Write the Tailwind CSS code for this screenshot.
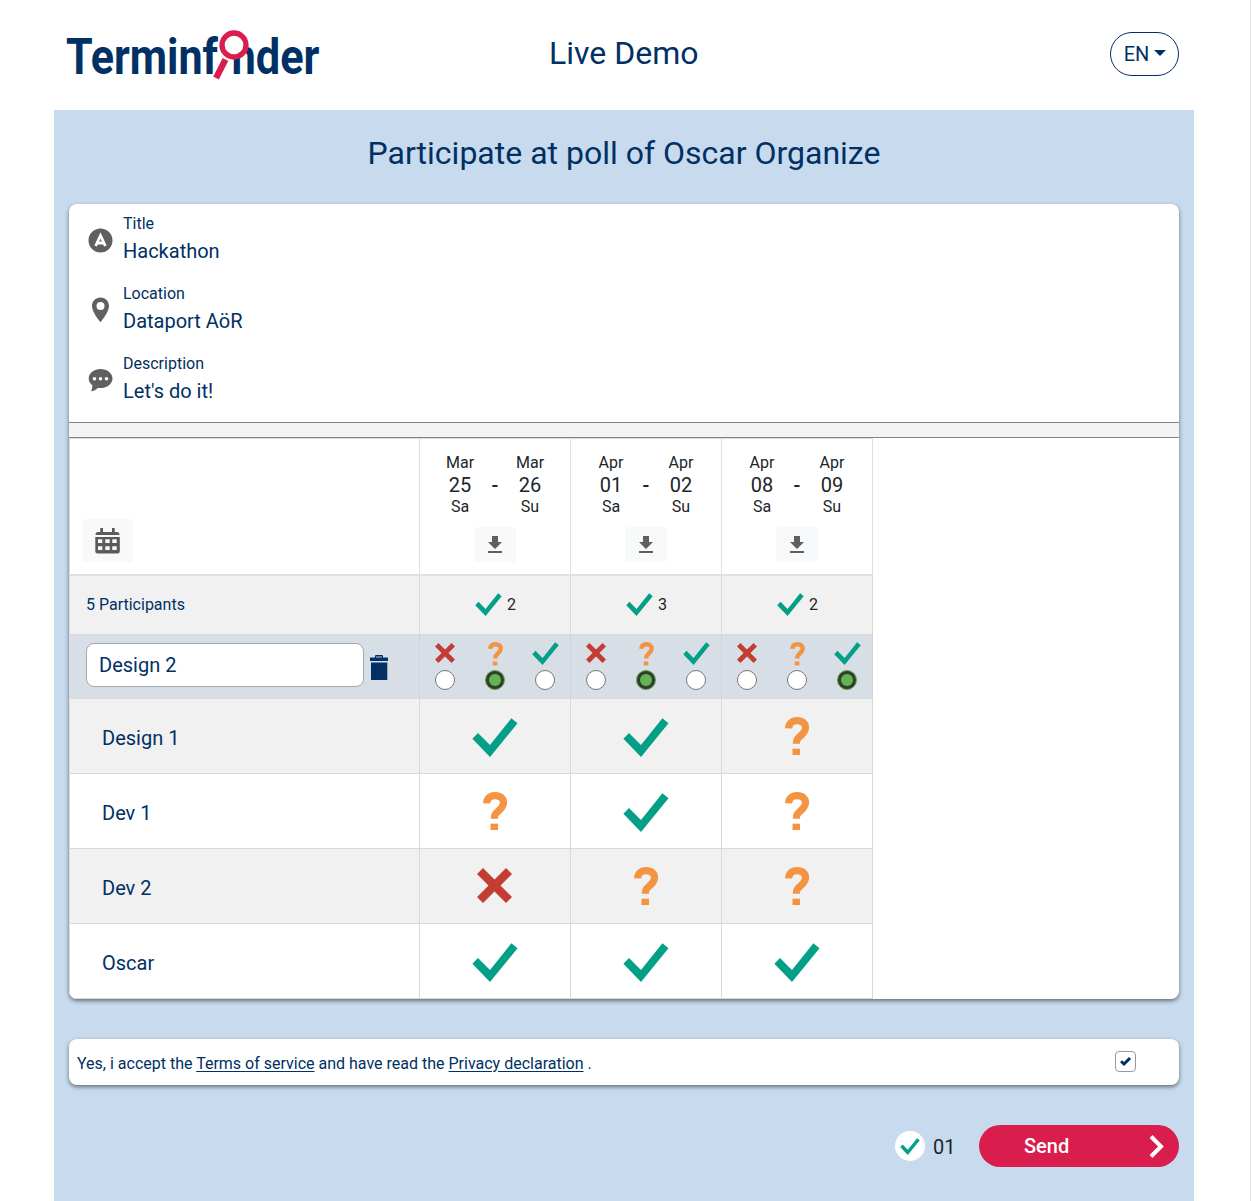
<!DOCTYPE html>
<html lang="en">
<head>
<meta charset="utf-8">
<title>Terminfinder</title>
<script src="https://cdn.jsdelivr.net/npm/@tailwindcss/browser@4"></script>
</head>
<body class="bg-white">
<svg class="hidden">
  <symbol id="check" viewBox="0 0 46 39"><path fill="#049f87" d="M.4 20.700 6 15l12 12L39.400.3l6.100 5L18 39z"/></symbol>
  <symbol id="cross" viewBox="0 0 35 35"><path fill="#c33d34" d="M6 0l11.5 11.5L29 0l6 6-11.5 11.5L35 29l-6 6-11.5-11.5L6 35l-6-6 11.5-11.5L0 6z"/></symbol>
  <symbol id="maybe" viewBox="0 0 24 39"><path fill="none" stroke="#f29441" stroke-width="7.200" d="M3.600 11.300C3.800 6.300 7 3.600 12 3.600c5.400 0 8.500 2.800 8.500 7.100 0 3.300-1.800 5.200-4.700 7.900-3.400 3.100-4.500 4.200-4.500 8.200"/><path fill="#f29441" d="M7.500 31.700H15V38H7.500z"/></symbol>
  <symbol id="download" viewBox="0 0 14 17"><path fill="#5f5f5f" d="M4 0h6v6h4l-7 7-7-7h4zM0 15h14v2H0z"/></symbol>
</svg>
<div class="w-[1251px] h-[1201px] overflow-hidden border-r border-[#e4e6e8] font-['Roboto',sans-serif] text-[#003064]">
  <div class="ml-[54px] w-[1140px]">
    <header class="h-[110px] px-[13px] flex justify-between">
      <svg class="mt-4 w-[256px] h-[76px] shrink-0 overflow-visible" viewBox="0 -10 256 76">
        <g fill="#003064" font-family="Roboto, sans-serif" font-weight="700" font-size="49.5">
          <text x="-1" y="48.300" textLength="152" lengthAdjust="spacingAndGlyphs">Terminf</text>
          <text x="164.500" y="48.300" textLength="88" lengthAdjust="spacingAndGlyphs">nder</text>
        </g>
        <circle cx="167" cy="19" r="12" fill="#fff" stroke="#d91e4d" stroke-width="5.300"/>
        <path d="M158.500 33.500 149 52" stroke="#fff" stroke-width="9"/>
        <path d="M158.500 33.500 149 52" stroke="#d91e4d" stroke-width="6.300"/>
      </svg>
      <h1 class="mt-[33px] text-[32px] leading-10 w-[150px] ml-[2px] whitespace-nowrap">Live Demo</h1>
      <div class="w-[258px] flex justify-end pr-[2px]">
        <button class="mt-8 w-[69px] h-11 rounded-full border border-[#003064] text-xl flex items-center justify-center gap-[5px] pl-px">EN<span class="border-x-[6px] border-x-transparent border-t-[6px] border-t-[#003064] -mt-[2px]"></span></button>
      </div>
    </header>
    <main class="bg-[#c8daee] h-[1091px] px-[15px] pt-[21px]">
      <h2 class="text-center text-[32px] leading-[44px]">Participate at poll of Oscar Organize</h2>
      <section class="mt-[29px] h-[795px] w-[1110px] bg-white rounded-lg overflow-hidden shadow-[0_2px_4px_rgba(0,0,0,0.5)]">
        <div class="h-[218px] pl-[18.500px] flex flex-col">
          <div class="h-[70px] flex gap-[10.500px]">
            <svg class="mt-[23.500px] w-[25px] h-[25px]" viewBox="0 0 25 25"><circle cx="12.500" cy="12.500" r="12" fill="#606060"/><path d="M7.600 18 12.500 7.500 17.400 18M9 15h7" fill="none" stroke="#fff" stroke-width="2.800"/></svg>
            <div class="pt-2"><div class="text-base leading-6">Title</div><div class="text-xl leading-[30px]">Hackathon</div></div>
          </div>
          <div class="h-[70px] flex gap-[10.500px]">
            <svg class="mt-[23px] w-[25px] h-[26px]" viewBox="0 0 25 26"><path fill="#606060" fill-rule="evenodd" d="M12.500.5C7.500.5 4 4.200 4 9c0 6.200 8.500 16.300 8.500 16.300S21 15.200 21 9c0-4.800-3.500-8.500-8.500-8.500zm0 12.600a4 4 0 1 1 0-8 4 4 0 0 1 0 8z"/></svg>
            <div class="pt-2"><div class="text-base leading-6">Location</div><div class="text-xl leading-[30px]">Dataport AöR</div></div>
          </div>
          <div class="h-[70px] flex gap-[10.500px]">
            <svg class="mt-[23.500px] w-[25px] h-[24px]" viewBox="0 0 25 24"><path fill="#606060" d="M12.500 1C5.900 1 .7 5.300.7 10.500c0 3.100 1.600 5.300 3.800 7C4.400 19.500 3.800 21.700 3 23.300c2.700-.4 5-1.600 6.700-3.400.9.100 1.800.2 2.800.2 6.600 0 12-4.300 12-9.600S19.100 1 12.500 1z"/><g fill="#fff"><circle cx="6.500" cy="10.700" r="1.800"/><circle cx="12.500" cy="10.700" r="1.800"/><circle cx="18.500" cy="10.700" r="1.800"/></g></svg>
            <div class="pt-2"><div class="text-base leading-6">Description</div><div class="text-xl leading-[30px]">Let's do it!</div></div>
          </div>
        </div>
        <div class="h-4 bg-[#f3f4f6] border-y border-[#828488]"></div>
        <div class="w-[804px] h-[561px] border-l border-t border-[#dadcdf] grid grid-cols-[350px_151px_151px_151px] grid-rows-[137px_59px_64px_75px_75px_75px_75px] *:border-r *:border-b *:border-[#d8d9db]">
          <!-- Date columns -->
          <div class="border-b-2! border-[#dee0e5]! pl-3 flex items-end pb-3">
            <button class="w-[51px] h-[43px] rounded-[3px] bg-[#f8f9fb] flex items-center justify-center"><svg class="w-[25px] h-[26px]" viewBox="0 0 25 26"><path fill="#5b5b5b" fill-rule="evenodd" d="M5.300 0H8v4h9V0h2.700v4H22q2.500 0 2.500 3H.5q0-3 2.500-3h2.300zM.3 9h24.500v14q0 2.500-2.500 2.500H2.800Q.3 25.500.3 23zM3 11.300V15h4.300v-3.700zm7.300 0V15h4.400v-3.700zm7 0V15h4.400v-3.700zM3 18.200v3.700h4.300v-3.700zm7.300 0v3.700h4.400v-3.700zm7 0v3.700h4.400v-3.700z"/></svg></button>
          </div>
          <div class="border-b-2! border-[#dee0e5]! text-[#212529] flex flex-col items-center pt-3">
            <div class="w-[140px] grid grid-cols-[70px_70px] relative text-center text-base leading-[23px]">
              <div>Mar</div><div>Mar</div><div class="text-xl leading-[22px]">25</div><div class="text-xl leading-[22px]">26</div><div class="leading-[21px]">Sa</div><div class="leading-[21px]">Su</div>
              <span class="absolute left-[65px] top-[23px] text-xl leading-[22px] w-[10px] font-medium">-</span>
            </div>
            <button class="mt-[10px] w-[42px] h-[35px] rounded-[3px] bg-[#f8f9fb] flex items-center justify-center"><svg class="w-[14px] h-[17px]"><use href="#download"/></svg></button>
          </div>
          <div class="border-b-2! border-[#dee0e5]! text-[#212529] flex flex-col items-center pt-3">
            <div class="w-[140px] grid grid-cols-[70px_70px] relative text-center text-base leading-[23px]">
              <div>Apr</div><div>Apr</div><div class="text-xl leading-[22px]">01</div><div class="text-xl leading-[22px]">02</div><div class="leading-[21px]">Sa</div><div class="leading-[21px]">Su</div>
              <span class="absolute left-[65px] top-[23px] text-xl leading-[22px] w-[10px] font-medium">-</span>
            </div>
            <button class="mt-[10px] w-[42px] h-[35px] rounded-[3px] bg-[#f8f9fb] flex items-center justify-center"><svg class="w-[14px] h-[17px]"><use href="#download"/></svg></button>
          </div>
          <div class="border-b-2! border-[#dee0e5]! text-[#212529] flex flex-col items-center pt-3">
            <div class="w-[140px] grid grid-cols-[70px_70px] relative text-center text-base leading-[23px]">
              <div>Apr</div><div>Apr</div><div class="text-xl leading-[22px]">08</div><div class="text-xl leading-[22px]">09</div><div class="leading-[21px]">Sa</div><div class="leading-[21px]">Su</div>
              <span class="absolute left-[65px] top-[23px] text-xl leading-[22px] w-[10px] font-medium">-</span>
            </div>
            <button class="mt-[10px] w-[42px] h-[35px] rounded-[3px] bg-[#f8f9fb] flex items-center justify-center"><svg class="w-[14px] h-[17px]"><use href="#download"/></svg></button>
          </div>
          <!-- Totals -->
          <div class="bg-[#f1f1f1] pl-4 flex items-center text-base">5 Participants</div>
          <div class="bg-[#f1f1f1] flex items-center justify-center gap-[5px] text-base text-[#212529] pl-px"><svg class="w-[27px] h-[23px] -mt-px"><use href="#check"/></svg>2</div>
          <div class="bg-[#f1f1f1] flex items-center justify-center gap-[5px] text-base text-[#212529] pl-px"><svg class="w-[27px] h-[23px] -mt-px"><use href="#check"/></svg>3</div>
          <div class="bg-[#f1f1f1] flex items-center justify-center gap-[5px] text-base text-[#212529] pl-px"><svg class="w-[27px] h-[23px] -mt-px"><use href="#check"/></svg>2</div>
          <!-- Editable row -->
          <div class="bg-[#d8dee6] border-r-[#cfd4da]! pl-4 pt-2 flex gap-[6px]">
            <div class="w-[278px] h-11 rounded-lg border border-[#a3a9b0] bg-white pl-3 text-xl leading-[42px]">Design 2</div>
            <svg class="mt-[11.500px] w-[18px] h-[25px]" viewBox="0 0 18 25"><path fill="#003064" d="M0 2.500h5V1q0-1 1-1h6q1 0 1 1v1.500h5V6H0zM1 7.500h16.300V25H1z"/><path fill="#5c7a9c" d="M6 1h6v2H6z"/></svg>
          </div>
          <div class="bg-[#d8dee6] border-r-[#cfd4da]! grid grid-cols-3 justify-items-center">
            <div class="flex flex-col items-center"><div class="h-[35px] flex items-center"><svg class="w-5 h-5"><use href="#cross"/></svg></div><span class="w-5 h-5 rounded-full border border-[#777] bg-white"></span></div>
            <div class="flex flex-col items-center"><div class="h-[35px] pt-[7px]"><svg class="w-[15px] h-6"><use href="#maybe"/></svg></div><span class="w-5 h-5 rounded-full border border-[#5fa94e] bg-[#333d31] flex items-center justify-center"><i class="w-3 h-3 rounded-full bg-[#64b550]"></i></span></div>
            <div class="flex flex-col items-center"><div class="h-[35px] flex items-center pt-[2px]"><svg class="w-[27px] h-[23px]"><use href="#check"/></svg></div><span class="w-5 h-5 rounded-full border border-[#777] bg-white"></span></div>
          </div>
          <div class="bg-[#d8dee6] border-r-[#cfd4da]! grid grid-cols-3 justify-items-center">
            <div class="flex flex-col items-center"><div class="h-[35px] flex items-center"><svg class="w-5 h-5"><use href="#cross"/></svg></div><span class="w-5 h-5 rounded-full border border-[#777] bg-white"></span></div>
            <div class="flex flex-col items-center"><div class="h-[35px] pt-[7px]"><svg class="w-[15px] h-6"><use href="#maybe"/></svg></div><span class="w-5 h-5 rounded-full border border-[#5fa94e] bg-[#333d31] flex items-center justify-center"><i class="w-3 h-3 rounded-full bg-[#64b550]"></i></span></div>
            <div class="flex flex-col items-center"><div class="h-[35px] flex items-center pt-[2px]"><svg class="w-[27px] h-[23px]"><use href="#check"/></svg></div><span class="w-5 h-5 rounded-full border border-[#777] bg-white"></span></div>
          </div>
          <div class="bg-[#d8dee6] border-r-[#cfd4da]! grid grid-cols-3 justify-items-center">
            <div class="flex flex-col items-center"><div class="h-[35px] flex items-center"><svg class="w-5 h-5"><use href="#cross"/></svg></div><span class="w-5 h-5 rounded-full border border-[#777] bg-white"></span></div>
            <div class="flex flex-col items-center"><div class="h-[35px] pt-[7px]"><svg class="w-[15px] h-6"><use href="#maybe"/></svg></div><span class="w-5 h-5 rounded-full border border-[#777] bg-white"></span></div>
            <div class="flex flex-col items-center"><div class="h-[35px] flex items-center pt-[2px]"><svg class="w-[27px] h-[23px]"><use href="#check"/></svg></div><span class="w-5 h-5 rounded-full border border-[#5fa94e] bg-[#333d31] flex items-center justify-center"><i class="w-3 h-3 rounded-full bg-[#64b550]"></i></span></div>
          </div>
          <!-- Votes -->
          <div class="bg-[#f1f1f1] pl-8 pt-1 flex items-center text-xl">Design 1</div>
          <div class="bg-[#f1f1f1] flex items-center justify-center pt-[2px]"><svg class="w-[46px] h-[39px]"><use href="#check"/></svg></div>
          <div class="bg-[#f1f1f1] flex items-center justify-center pt-[2px]"><svg class="w-[46px] h-[39px]"><use href="#check"/></svg></div>
          <div class="bg-[#f1f1f1] flex items-center justify-center pt-px"><svg class="w-6 h-[39px]"><use href="#maybe"/></svg></div>

          <div class="pl-8 pt-1 flex items-center text-xl">Dev 1</div>
          <div class="flex items-center justify-center pt-px"><svg class="w-6 h-[39px]"><use href="#maybe"/></svg></div>
          <div class="flex items-center justify-center pt-[2px]"><svg class="w-[46px] h-[39px]"><use href="#check"/></svg></div>
          <div class="flex items-center justify-center pt-px"><svg class="w-6 h-[39px]"><use href="#maybe"/></svg></div>

          <div class="bg-[#f1f1f1] pl-8 pt-1 flex items-center text-xl">Dev 2</div>
          <div class="bg-[#f1f1f1] flex items-center justify-center pr-px pb-px"><svg class="w-[35px] h-[35px]"><use href="#cross"/></svg></div>
          <div class="bg-[#f1f1f1] flex items-center justify-center pt-px"><svg class="w-6 h-[39px]"><use href="#maybe"/></svg></div>
          <div class="bg-[#f1f1f1] flex items-center justify-center pt-px"><svg class="w-6 h-[39px]"><use href="#maybe"/></svg></div>

          <div class="pl-8 pt-1 flex items-center text-xl">Oscar</div>
          <div class="flex items-center justify-center pt-[2px]"><svg class="w-[46px] h-[39px]"><use href="#check"/></svg></div>
          <div class="flex items-center justify-center pt-[2px]"><svg class="w-[46px] h-[39px]"><use href="#check"/></svg></div>
          <div class="flex items-center justify-center pt-[2px]"><svg class="w-[46px] h-[39px]"><use href="#check"/></svg></div>
        </div>
      </section>
      <section class="mt-10 h-[46px] bg-white rounded-lg shadow-[0_2px_4px_rgba(0,0,0,0.5)] pl-2 pr-[43px] flex items-center justify-between text-base">
        <p class="pt-[3px]">Yes, i accept the <a class="underline underline-offset-2">Terms of service</a> and have read the <a class="underline underline-offset-2">Privacy declaration</a> .</p>
        <span class="mb-[2px] w-[21px] h-[21px] rounded-[4px] border border-[#999] flex items-center justify-center"><svg class="w-[11px] h-[9px]" viewBox="0 0 11 9"><path d="M1 4.200 4 7 10 1.100" fill="none" stroke="#003064" stroke-width="2.900"/></svg></span>
      </section>
      <div class="mt-10 flex items-center justify-end">
        <span class="w-[30px] h-[30px] rounded-full bg-white flex items-center justify-center"><svg class="w-5 h-[17px]"><use href="#check"/></svg></span>
        <span class="ml-2 pt-[2px] text-xl text-[#212529] w-[46px]">01</span>
        <button class="w-[200px] h-[42px] rounded-full bg-[#d91e4d] text-white text-xl font-medium flex items-center justify-between pl-[45px] pr-[15px]">Send<svg class="w-[15px] h-[23px]" viewBox="0 0 15 23"><path d="M2 1.500 12 11.500 2 21.500" fill="none" stroke="#fff" stroke-width="4"/></svg></button>
      </div>
    </main>
  </div>
</div>
</body>
</html>
